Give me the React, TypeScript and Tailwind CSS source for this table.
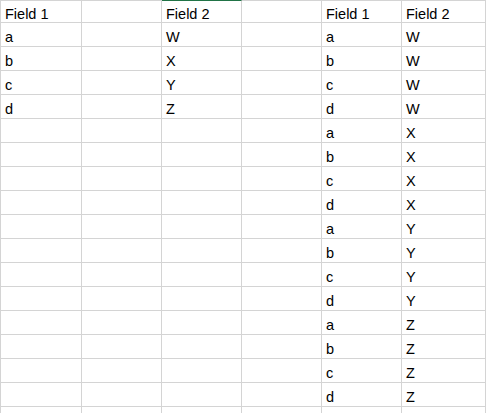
import React from 'react'

const left = [
  ['a', 'W'],
  ['b', 'X'],
  ['c', 'Y'],
  ['d', 'Z'],
]

const letters = ['a', 'b', 'c', 'd']
const right = ['W', 'X', 'Y', 'Z'].flatMap(v => letters.map(l => [l, v]))

const widths = ['w-[81px]', 'w-[80px]', 'w-[80px]', 'w-[80px]', 'w-[80px]', 'w-[84px]']

const rows: string[][] = [['Field 1', '', 'Field 2', '', 'Field 1', 'Field 2']]
for (let i = 0; i < 17; i++) {
  const l = left[i]
  const r = right[i]
  rows.push([l ? l[0] : '', '', l ? l[1] : '', '', r ? r[0] : '', r ? r[1] : ''])
}

export default function App() {
  return (
    <div
      className="w-[486px] h-[413px] overflow-hidden bg-white text-black border-l border-[#d4d4d4]"
      style={{ fontFamily: '"Liberation Sans", Arial, sans-serif' }}
    >
      {rows.map((row, r) => (
        <div key={r} className="flex">
          {row.map((cell, c) => (
            <div
              key={c}
              className={`${widths[c]} shrink-0 border-r border-b border-[#d4d4d4] pl-[4px] text-[14.5px] leading-[17px] whitespace-nowrap overflow-hidden ${
                r === 0 ? 'h-[23px] pt-[5px] border-t' : 'h-[24px] pt-[6px]'
              } ${r === 0 && c === 2 ? 'border-t-[#217346]' : ''}`}
            >
              {cell}
            </div>
          ))}
        </div>
      ))}
    </div>
  )
}
